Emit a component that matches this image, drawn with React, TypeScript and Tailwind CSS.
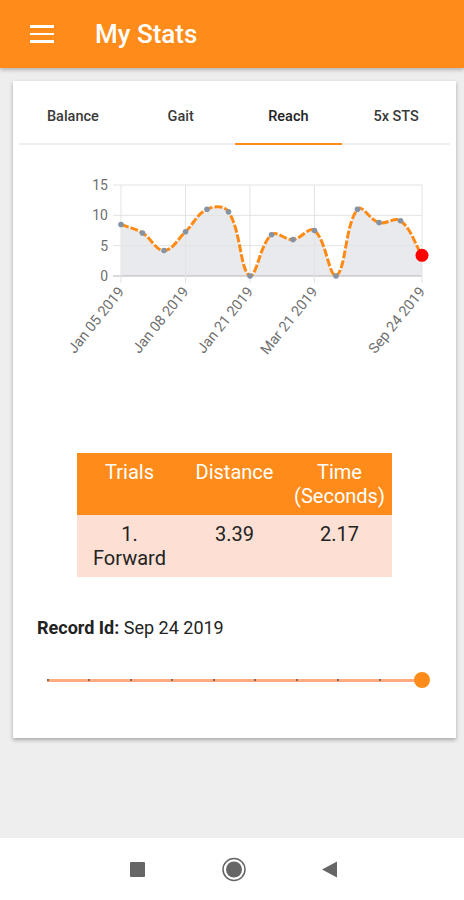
import React from "react";

const values = [8.5, 7.1, 4.2, 7.3, 11, 10.6, 0, 6.8, 6.0, 7.5, 0, 11, 8.8, 9.1, 3.4];
const X0 = 121;
const X1 = 422;
const YTOP = 185;
const YBOT = 276;

const pts = values.map((v, i) => ({
  x: X0 + (i * (X1 - X0)) / (values.length - 1),
  y: YBOT - (v * (YBOT - YTOP)) / 15,
}));

const clampY = (y: number) => Math.min(YBOT, Math.max(YTOP, y));

// chart.js style spline control points
const buildPath = () => {
  const t = 0.4;
  const cps = pts.map((cur, i) => {
    const prev = pts[i - 1] || cur;
    const next = pts[i + 1] || cur;
    const d01 = Math.hypot(cur.x - prev.x, cur.y - prev.y);
    const d12 = Math.hypot(next.x - cur.x, next.y - cur.y);
    let s01 = d01 / (d01 + d12);
    let s12 = d12 / (d01 + d12);
    if (isNaN(s01)) s01 = 0;
    if (isNaN(s12)) s12 = 0;
    const fa = t * s01;
    const fb = t * s12;
    return {
      px: cur.x - fa * (next.x - prev.x),
      py: clampY(cur.y - fa * (next.y - prev.y)),
      nx: cur.x + fb * (next.x - prev.x),
      ny: clampY(cur.y + fb * (next.y - prev.y)),
    };
  });
  let d = `M ${pts[0].x} ${pts[0].y}`;
  for (let i = 1; i < pts.length; i++) {
    d += ` C ${cps[i - 1].nx} ${cps[i - 1].ny} ${cps[i].px} ${cps[i].py} ${pts[i].x} ${pts[i].y}`;
  }
  return d;
};

const linePath = buildPath();
const fillPath = `${linePath} L ${X1} ${YBOT} L ${X0} ${YBOT} Z`;

const xLabels = [
  { i: 0, text: "Jan 05 2019" },
  { i: 3, text: "Jan 08 2019" },
  { i: 6, text: "Jan 21 2019" },
  { i: 9, text: "Mar 21 2019" },
  { i: 14, text: "Sep 24 2019" },
];

const yTicks = [15, 10, 5, 0];

const Chart = () => (
  <svg width={431} height={300} viewBox="19 145 431 300" className="block">
    <path d={fillPath} fill="#e9eaee" />
    {yTicks.map((v) => {
      const y = YBOT - (v * (YBOT - YTOP)) / 15;
      return (
        <g key={v}>
          <line
            x1={113}
            x2={X1}
            y1={y}
            y2={y}
            stroke={v === 0 ? "#b5b5b5" : "#e3e3e3"}
            strokeWidth={1}
          />
          <text
            x={108}
            y={y + 5}
            textAnchor="end"
            fontSize={14}
            fill="#707070"
            fontFamily="Roboto, sans-serif"
          >
            {v}
          </text>
        </g>
      );
    })}
    {xLabels.map((l) => {
      const x = pts[l.i].x;
      return (
        <g key={l.text}>
          <line x1={x} x2={x} y1={YTOP} y2={283} stroke="#e3e3e3" strokeWidth={1} />
          <text
            x={x + 4}
            y={292}
            textAnchor="end"
            fontSize={14.5}
            fill="#707070"
            fontFamily="Roboto, sans-serif"
            transform={`rotate(-51 ${x + 4} ${292})`}
          >
            {l.text}
          </text>
        </g>
      );
    })}
    <path
      d={linePath}
      fill="none"
      stroke="#ff8a14"
      strokeWidth={3}
      strokeDasharray="8 2"
    />
    {pts.slice(0, -1).map((p, i) => (
      <circle key={i} cx={p.x} cy={p.y} r={2.8} fill="#8593a3" />
    ))}
    <circle cx={pts[14].x} cy={pts[14].y} r={6.5} fill="#ff0000" />
  </svg>
);

const tabs = ["Balance", "Gait", "Reach", "5x STS"];

export default function App() {
  const ticks = Array.from({ length: 10 }, (_, i) => i);
  return (
    <div
      className="w-[464px] h-[900px] bg-[#eeeeee] flex flex-col overflow-hidden"
      style={{ fontFamily: "Roboto, 'Liberation Sans', sans-serif" }}
    >
      <header className="h-[68px] shrink-0 bg-[#ff8c1a] flex items-center shadow-[0_2px_4px_rgba(0,0,0,0.25)] relative z-10">
        <div className="ml-[30px] w-[24px] flex flex-col gap-[5px]">
          <span className="block h-[2.5px] bg-white" />
          <span className="block h-[2.5px] bg-white" />
          <span className="block h-[2.5px] bg-white" />
        </div>
        <h1 className="ml-[41px] text-white text-[26px] font-medium leading-none">My Stats</h1>
      </header>

      <main className="flex-1 pl-[13px] pt-[13px]">
        <div className="w-[443px] h-[657px] bg-white shadow-[0_2px_4px_rgba(0,0,0,0.3)] px-[6px]">
          <div className="pt-[9px] flex border-b-2 border-[#eeeeee]">
            {tabs.map((t) => (
              <div
                key={t}
                className={`flex-1 h-[53px] flex items-center justify-center text-[14.5px] font-medium relative ${
                  t === "Reach" ? "text-[#222]" : "text-[#3a3a3a]"
                }`}
              >
                {t}
                {t === "Reach" && (
                  <span className="absolute left-0 right-0 -bottom-[2px] h-[2px] bg-[#ff8c1a]" />
                )}
              </div>
            ))}
          </div>

          <Chart />

          <div className="ml-[58px] mt-[8px] w-[315px]">
            <div className="grid grid-cols-3 bg-[#ff8c1a] text-white text-[20px] leading-[24px] h-[62px] pt-[7px] text-center">
              <div>Trials</div>
              <div>Distance</div>
              <div>
                Time
                <br />
                (Seconds)
              </div>
            </div>
            <div className="grid grid-cols-3 bg-[#fde0d3] text-[#222] text-[20px] leading-[24px] h-[62px] pt-[7px] text-center">
              <div>
                1.
                <br />
                Forward
              </div>
              <div>3.39</div>
              <div>2.17</div>
            </div>
          </div>

          <p className="ml-[18px] mt-[38px] text-[18px] leading-[26px] text-[#222]">
            <span className="font-bold">Record Id:</span> Sep 24 2019
          </p>

          <div className="ml-[28px] mt-[31px] w-[383px] h-[16px] relative flex items-center">
            <div className="h-[3px] w-[375px] bg-[#ffab80] flex justify-between items-center">
              {ticks.map((i) => (
                <span key={i} className="block w-[2px] h-[2px] bg-[#555] rounded-full" />
              ))}
            </div>
            <span className="absolute right-0 top-0 w-[16px] h-[16px] rounded-full bg-[#ff8c1a]" />
          </div>
        </div>
      </main>

      <nav className="h-[62px] shrink-0 bg-white flex items-center justify-center">
        <svg width={464} height={62} viewBox="0 838 464 62">
          <rect x={130} y={862} width={15} height={15} rx={1} fill="#666" />
          <circle cx={234} cy={869.5} r={11} fill="none" stroke="#666" strokeWidth={1.5} />
          <circle cx={234} cy={869.5} r={8} fill="#666" />
          <path d="M322 869.5 L337 861.5 L337 877.5 Z" fill="#666" strokeLinejoin="round" />
        </svg>
      </nav>
    </div>
  );
}
